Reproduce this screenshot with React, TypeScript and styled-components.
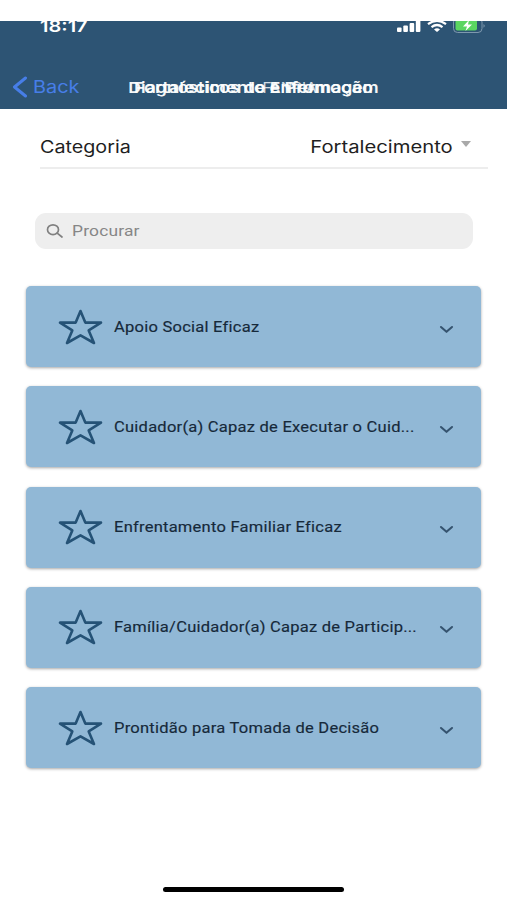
import React from "react";
import styled, { createGlobalStyle } from "styled-components";

const Global = createGlobalStyle`
  * { box-sizing: border-box; }
  body { margin: 0; background: #fff; font-family: Inter, "Liberation Sans", sans-serif; }
`;

const Screen = styled.main`
  width: 507px;
  height: 900px;
  padding-top: 21px;
  display: flex;
  flex-direction: column;
  background: #fff;
  overflow: hidden;
`;

const Wide = styled.span<{ $x: number; $origin?: string }>`
  display: inline-block;
  white-space: nowrap;
  transform: scaleX(${(p) => p.$x});
  transform-origin: ${(p) => p.$origin ?? "left"} center;
`;

const Header = styled.header`
  height: 88px;
  flex: none;
  background: #2d5474;
  overflow: hidden;
`;

const StatusBar = styled.div`
  height: 44px;
  display: flex;
  justify-content: space-between;
  padding: 0 21px 0 40px;
  color: #fff;
`;

const Clock = styled.div`
  font-size: 16px;
  font-weight: 600;
  line-height: 20px;
  margin-top: -5px;
`;

const StatusIcons = styled.div`
  display: flex;
  height: 13px;
  gap: 6px;
`;

const NavBar = styled.div`
  height: 44px;
  display: grid;
  grid-template-columns: 1fr;
  align-items: center;
`;

const Back = styled.div`
  grid-area: 1 / 1;
  display: flex;
  align-items: center;
  gap: 5px;
  padding-left: 12px;
  color: #477ee8;
  font-size: 17px;
  line-height: 22px;
`;

const Title = styled.div<{ $weight: number; $shift?: number }>`
  grid-area: 1 / 1;
  justify-self: center;
  margin: 1px 0 0 ${(p) => p.$shift ?? 0}px;
  color: #fff;
  font-size: 15px;
  font-weight: ${(p) => p.$weight};
  line-height: 22px;
  opacity: ${(p) => (p.$weight < 600 ? 0.8 : 0.95)};
`;

const Category = styled.section`
  height: 60px;
  margin: 0 19px 0 40px;
  padding: 18px 17px 0 0;
  display: flex;
  align-items: center;
  border-bottom: 2px solid #ededed;
  font-size: 17px;
  line-height: 24px;
  color: #1f1f1f;
`;

const Selected = styled.div`
  margin-left: auto;
  margin-right: 8px;
`;

const Caret = styled.i`
  border: 5.5px solid transparent;
  border-top: 6px solid #a9a9a9;
  border-bottom: 0;
  margin-top: -6px;
`;

const Search = styled.div`
  height: 36px;
  margin: 43.5px 34px 0 35px;
  padding-left: 11px;
  display: flex;
  align-items: center;
  gap: 8px;
  border-radius: 11px;
  background: #eee;
  color: #868686;
  font: 400 14.5px/20px Roboto, sans-serif;
  letter-spacing: 0.15px;
`;

const SearchText = styled.div`
  margin-top: 2px;
`;

const List = styled.ul`
  list-style: none;
  margin: 37.5px 26px 0;
  padding: 0;
  display: flex;
  flex-direction: column;
  gap: 19.3px;
`;

const Card = styled.li`
  height: 81px;
  display: flex;
  align-items: center;
  padding: 0 27px 0 32px;
  border-radius: 5px;
  background: #91b8d6;
  box-shadow: 0 1px 3px rgba(0, 0, 0, 0.35);
  color: #16293a;
  font: 400 14px/20px Roboto, sans-serif;
  letter-spacing: 0.2px;
  -webkit-text-stroke: 0.15px #16293a;
`;

const Label = styled.div`
  flex: 1;
  margin: 0 0 0 11px;
`;

const ChevronIcon = styled.svg`
  margin-top: 5px;
`;

const HomeIndicator = styled.div`
  width: 181px;
  height: 5px;
  border-radius: 3px;
  background: #000;
  margin: auto auto 8px 163px;
`;

const Star = () => (
  <svg width="45" height="36" viewBox="0 0 45 36" fill="none" stroke="#255276" strokeWidth="2.6" strokeLinejoin="round">
    <path d="M22.5 2 L27.3 13.6 H43 L30.7 21.4 L36 34 L22.5 26.4 L9 34 L14.3 21.4 L2 13.6 H17.7 Z" />
  </svg>
);

const Chevron = () => (
  <ChevronIcon width="15" height="9" viewBox="0 0 15 9" fill="none" stroke="#35536f" strokeWidth="2.1" strokeLinecap="round" strokeLinejoin="round">
    <path d="M2 2 L7.5 6.8 L13 2" />
  </ChevronIcon>
);

const items = [
  "Apoio Social Eficaz",
  "Cuidador(a) Capaz de Executar o Cuid...",
  "Enfrentamento Familiar Eficaz",
  "Família/Cuidador(a) Capaz de Particip...",
  "Prontidão para Tomada de Decisão",
];

export default function App() {
  return (
    <Screen>
      <Global />
      <Header>
        <StatusBar>
          <Clock><Wide $x={1.25}>18:17</Wide></Clock>
          <StatusIcons>
            <svg width="24" height="13" viewBox="0 0 24 13" fill="#fff">
              <rect x="0" y="6.5" width="4.6" height="4.5" rx="1" />
              <rect x="6.3" y="4.5" width="4.6" height="6.5" rx="1" />
              <rect x="12.6" y="2" width="4.6" height="9" rx="1" />
              <rect x="18.8" y="-1" width="4.6" height="12" rx="1" />
            </svg>
            <svg width="20" height="13" viewBox="0 0 20 13" fill="none" stroke="#fff" strokeWidth="2.2">
              <path d="M1 3.2 Q10 -3.5 19 3.2" />
              <path d="M4.5 6.2 Q10 1.8 15.5 6.2" />
              <path d="M7 8.4 Q10 6.3 13 8.4 L10 11 Z" fill="#fff" stroke="none" />
            </svg>
            <svg width="33" height="13" viewBox="0 0 33 13">
              <rect x="0.5" y="-3" width="28.5" height="14.5" rx="4" fill="none" stroke="#7e98ae" />
              <rect x="2.5" y="-1" width="21.5" height="10.5" rx="2" fill="#5bd561" />
              <path d="M16 -1 L10 5.5 H14 L12.5 10 L19 3.5 H15 Z" fill="#fff" />
              <path d="M30.5 3 Q33 4.8 30.5 6.8 Z" fill="#7e98ae" />
            </svg>
          </StatusIcons>
        </StatusBar>
        <NavBar>
          <Back>
            <svg width="16" height="22" viewBox="0 0 16 22" fill="none" stroke="#477ee8" strokeWidth="3" strokeLinecap="round" strokeLinejoin="round">
              <path d="M13.5 2 L2.5 11 L13.5 20" />
            </svg>
            <Wide $x={1.17}>Back</Wide>
          </Back>
          <Title $weight={600}><Wide $x={1.175} $origin="center">Diagnósticos de Enfermagem</Wide></Title>
          <Title $weight={600}><Wide $x={1.2} $origin="center">Fortalecimento e Promoção</Wide></Title>
          <Title $weight={400} $shift={73}><Wide $x={1.02} $origin="center">FANPIA</Wide></Title>
        </NavBar>
      </Header>
      <Category>
        <Wide $x={1.16}>Categoria</Wide>
        <Selected><Wide $x={1.19} $origin="right">Fortalecimento</Wide></Selected>
        <Caret />
      </Category>
      <Search>
        <svg width="18" height="16" viewBox="0 0 18 16" fill="none" stroke="#808080" strokeWidth="1.7" strokeLinecap="round">
          <ellipse cx="7" cy="6.7" rx="5.5" ry="4.9" />
          <path d="M11.2 10.2 L16 14" />
        </svg>
        <SearchText><Wide $x={1.2}>Procurar</Wide></SearchText>
      </Search>
      <List>
        {items.map((text) => (
          <Card key={text}>
            <Star />
            <Label><Wide $x={1.18}>{text}</Wide></Label>
            <Chevron />
          </Card>
        ))}
      </List>
      <HomeIndicator />
    </Screen>
  );
}
